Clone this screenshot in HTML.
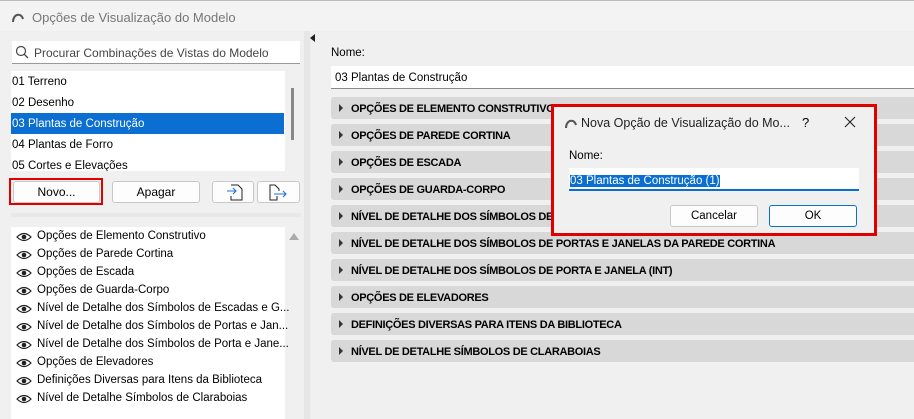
<!DOCTYPE html>
<html><head><meta charset="utf-8"><style>
*{box-sizing:border-box;margin:0;padding:0}
body{width:914px;height:419px;overflow:hidden;background:#f0f0f0;font-family:"Liberation Sans",sans-serif;font-size:12px;color:#000;position:relative}
.abs{position:absolute}
.title{left:0;top:0;width:914px;height:31px;background:#f3f3f3;border-top:1px solid #bbb}
.title span{position:absolute;left:32px;top:9px;color:#777;font-size:13px}
.list{background:#fff}
.item{position:absolute;left:2px;height:21px;line-height:23px;padding-left:1px;font-size:11.5px;width:272px}
.sel{background:#0a6fd0;color:#fff}
.btn{position:absolute;height:22px;background:#fdfdfd;border:1px solid #c8c8c8;border-radius:3px;text-align:center;line-height:21px;font-size:12px}
.bar{position:absolute;left:331px;width:600px;height:22px;background:#d8d8d8;border-radius:3px;font-weight:bold;font-size:11px;line-height:24px;padding-left:20px;letter-spacing:-0.3px}
.bar:before{content:"";position:absolute;left:8px;top:7px;border-left:4px solid #333;border-top:4px solid transparent;border-bottom:4px solid transparent}
.eye{position:absolute;left:16px;width:16px;height:10px}
.opt{position:absolute;left:37px;font-size:11.5px}
</style></head><body>
<div class="abs title">
<svg class="abs" style="left:11px;top:10px" width="14" height="12" viewBox="0 0 14 12"><path d="M2 11 C2 3 10 1 12 8" fill="none" stroke="#555" stroke-width="2"/></svg>
<span>Opções de Visualização do Modelo</span></div>
<div class="abs" style="left:12px;top:41px;width:288px;height:23px;background:#fff;border-bottom:1px solid #999"></div>
<svg class="abs" style="left:15px;top:45px" width="14" height="14" viewBox="0 0 14 14"><circle cx="6" cy="6" r="4.5" fill="none" stroke="#444" stroke-width="1.2"/><path d="M9.3 9.3 L13 13" stroke="#444" stroke-width="1.3"/></svg>
<div class="abs" style="left:34px;top:46px;font-size:12px;color:#444">Procurar Combinações de Vistas do Modelo</div>
<div class="abs list" style="left:11px;top:71px;width:274px;height:100px"></div>
<div class="item" style="left:11px;top:71px">01 Terreno</div>
<div class="item" style="left:11px;top:92px">02 Desenho</div>
<div class="item sel" style="left:11px;top:113px;width:273px">03 Plantas de Construção</div>
<div class="item" style="left:11px;top:134px">04 Plantas de Forro</div>
<div class="item" style="left:11px;top:155px;height:16px;overflow:hidden">05 Cortes e Elevações</div>
<div class="abs" style="left:291px;top:88px;width:3px;height:52px;background:#888"></div>
<div class="btn" style="left:13px;top:181px;width:87px">Novo...</div>
<div class="abs" style="left:9px;top:178px;width:94px;height:27px;border:2px solid #e00000"></div>
<div class="btn" style="left:112px;top:181px;width:88px">Apagar</div>
<div class="btn" style="left:212px;top:181px;width:42px"></div>
<svg class="abs" style="left:226px;top:184px" width="18" height="17" viewBox="0 0 18 17"><path d="M5 1 H12 L16 5 V16 H5 V12" fill="none" stroke="#222"/><path d="M1 7 H10 M7 4 L10 7 L7 10" fill="none" stroke="#1a73d9" stroke-width="1.1"/></svg>
<div class="btn" style="left:257px;top:181px;width:43px"></div>
<svg class="abs" style="left:268px;top:184px" width="20" height="17" viewBox="0 0 20 17"><path d="M9 12 V16 H2 V1 H7 L11 5 V7" fill="none" stroke="#222"/><path d="M6 10 H18 M15 7 L18 10 L15 13" fill="none" stroke="#1a73d9" stroke-width="1.1"/></svg>
<div class="abs" style="left:11px;top:213px;width:290px;height:4px;background:#e8e8e8"></div>
<div class="abs list" style="left:11px;top:227px;width:274px;height:192px"></div>
<div class="abs" style="left:289px;top:233px;border-bottom:7px solid #aaa;border-left:5px solid transparent;border-right:5px solid transparent"></div>
<div class="abs" style="left:304px;top:31px;width:6px;height:388px;background:#e6e6e6"></div>
<div class="abs" style="left:310px;top:34px;border-right:5px solid #222;border-top:4px solid transparent;border-bottom:4px solid transparent"></div>
<div id="opts"></div>
<div class="abs" style="left:331px;top:47px;font-size:11.5px">Nome:</div>
<div class="abs" style="left:331px;top:66px;width:583px;height:23px;background:#fff;border-bottom:1px solid #888;padding:6px 0 0 4px;font-size:11.5px">03 Plantas de Construção</div>
<div class="bar" style="top:97px">OPÇÕES DE ELEMENTO CONSTRUTIVO</div>
<div class="bar" style="top:124px">OPÇÕES DE PAREDE CORTINA</div>
<div class="bar" style="top:151px">OPÇÕES DE ESCADA</div>
<div class="bar" style="top:178px">OPÇÕES DE GUARDA-CORPO</div>
<div class="bar" style="top:205px">NÍVEL DE DETALHE DOS SÍMBOLOS DE ESCADAS E GUARDA-CORPOS</div>
<div class="bar" style="top:232px">NÍVEL DE DETALHE DOS SÍMBOLOS DE PORTAS E JANELAS DA PAREDE CORTINA</div>
<div class="bar" style="top:259px">NÍVEL DE DETALHE DOS SÍMBOLOS DE PORTA E JANELA (INT)</div>
<div class="bar" style="top:286px">OPÇÕES DE ELEVADORES</div>
<div class="bar" style="top:313px">DEFINIÇÕES DIVERSAS PARA ITENS DA BIBLIOTECA</div>
<div class="bar" style="top:340px">NÍVEL DE DETALHE SÍMBOLOS DE CLARABOIAS</div>
<div class="abs" style="left:551px;top:104px;width:326px;height:132px;background:#f0f0f0;border:3px solid #e00000">
<svg class="abs" style="left:10px;top:10px" width="14" height="12" viewBox="0 0 14 12"><path d="M2 11 C2 3 10 1 12 8" fill="none" stroke="#555" stroke-width="2"/></svg>
<div class="abs" style="left:27px;top:9px;font-size:12.5px;color:#222">Nova Opção de Visualização do Mo...</div>
<div class="abs" style="left:248px;top:8px;font-size:13px">?</div>
<svg class="abs" style="left:290px;top:9px" width="12" height="12" viewBox="0 0 12 12"><path d="M1 1 L11 11 M11 1 L1 11" stroke="#222" stroke-width="1.1"/></svg>
<div class="abs" style="left:15px;top:43px;font-size:11.5px">Nome:</div>
<div class="abs" style="left:15px;top:61px;width:290px;height:23px;background:#fff;border-bottom:2px solid #0a6fd0;padding:5px 0 0 1px"><span style="background:#0a6fd0;color:#fff;font-size:11.5px">03 Plantas de Construção (1)</span></div>
<div class="btn" style="left:116px;top:98px;width:88px;height:22px;font-size:11.5px">Cancelar</div>
<div class="btn" style="left:215px;top:98px;width:88px;height:22px;border-color:#0a6fd0;font-size:11.5px">OK</div>
</div>
<script>
var t=["Opções de Elemento Construtivo","Opções de Parede Cortina","Opções de Escada","Opções de Guarda-Corpo","Nível de Detalhe dos Símbolos de Escadas e G...","Nível de Detalhe dos Símbolos de Portas e Jan...","Nível de Detalhe dos Símbolos de Porta e Jane...","Opções de Elevadores","Definições Diversas para Itens da Biblioteca","Nível de Detalhe Símbolos de Claraboias"],h="";
t.forEach(function(s,i){var y=230+i*18;h+='<svg class="eye" style="top:'+(y+2)+'px" viewBox="0 0 16 10"><path d="M1 5 Q8 -2 15 5 Q8 12 1 5Z" fill="none" stroke="#222" stroke-width="1.2"/><circle cx="8" cy="5" r="2.3" fill="#222"/></svg><div class="opt" style="top:'+(y)+'px">'+s+'</div>';});
document.getElementById("opts").innerHTML=h;
</script>
</body></html>
